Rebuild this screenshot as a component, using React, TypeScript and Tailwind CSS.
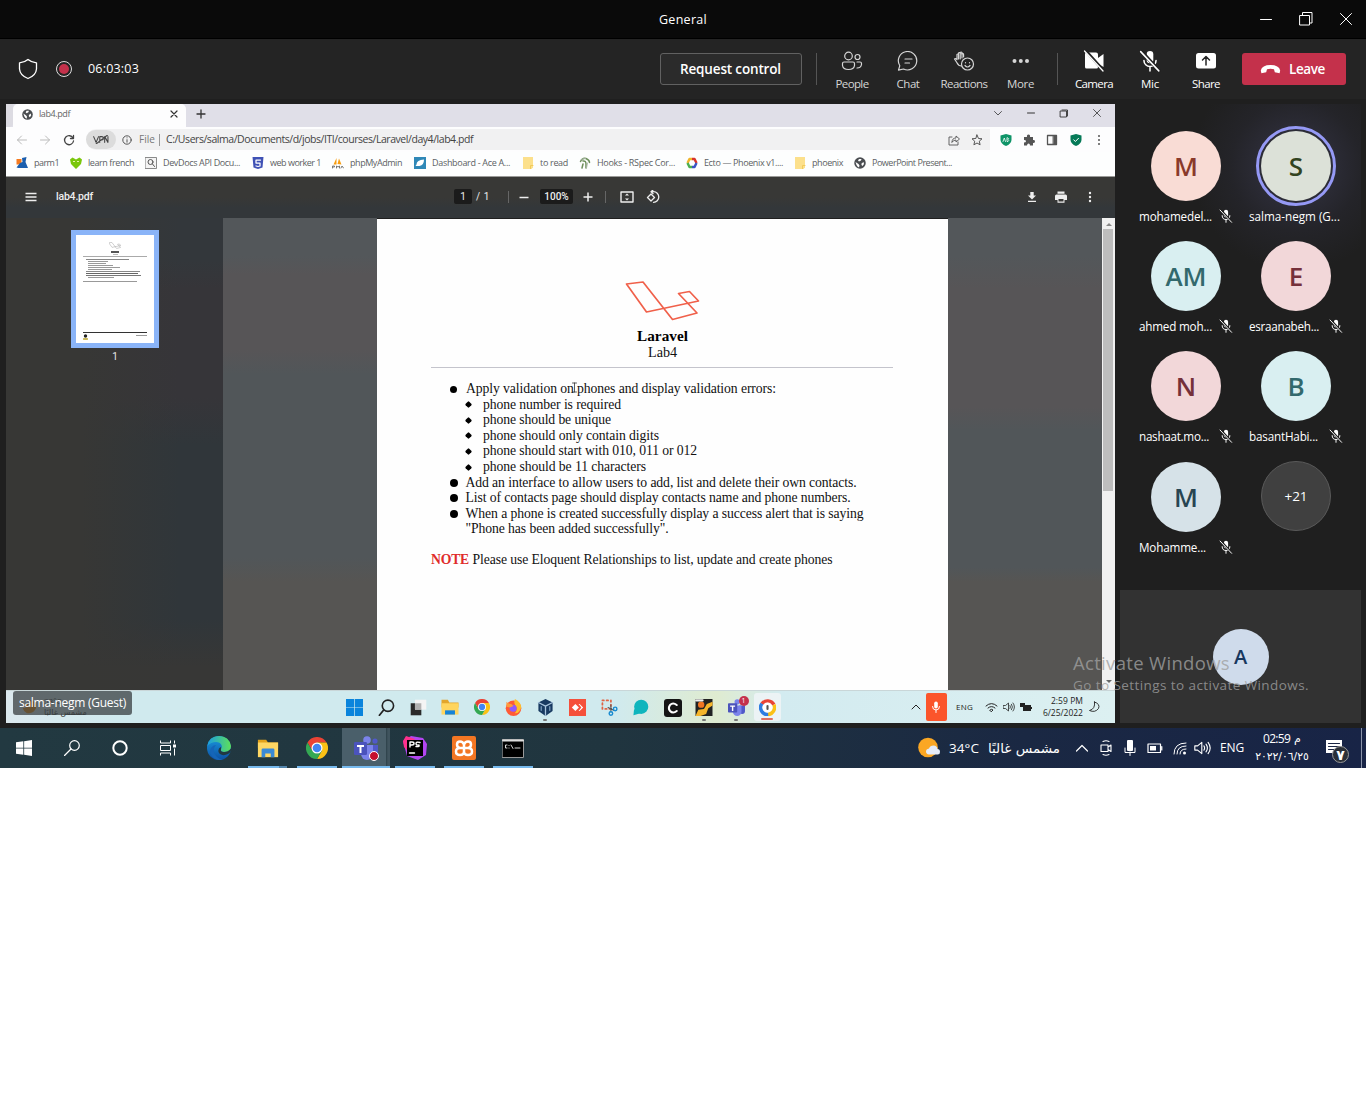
import { useLayoutEffect, useRef, useState, type ReactNode } from "react";

/* Text that is tracked so that it fills the width given in its classes. */
function Fit({ c, children }: { c: string; children: string }) {
  const outer = useRef<HTMLSpanElement>(null);
  const inner = useRef<HTMLSpanElement>(null);
  const [ls, setLs] = useState(0);
  useLayoutEffect(() => {
    if (!outer.current || !inner.current) return;
    const free = outer.current.getBoundingClientRect().width - inner.current.getBoundingClientRect().width;
    setLs(free / children.length);
  }, [children]);
  return (
    <span ref={outer} className={"block shrink-0 whitespace-nowrap " + c}>
      <span ref={inner} style={{ letterSpacing: ls }}>{children}</span>
    </span>
  );
}

function I({ c, v = "0 0 24 24", children }: { c: string; v?: string; children: ReactNode }) {
  return (
    <svg viewBox={v} className={"block shrink-0 " + c} fill="none" stroke="currentColor" strokeLinecap="round" strokeLinejoin="round">
      {children}
    </svg>
  );
}

const Chrome = ({ c }: { c: string }) => (
  <I c={c}>
    <g stroke="none">
      <path fill="#ea4335" d="M1.6 6A12 12 0 0 1 22.4 6H12L6.8 15Z" />
      <path fill="#fbc116" d="M22.4 6A12 12 0 0 1 12 24L17.2 15L12 6Z" />
      <path fill="#34a853" d="M12 24A12 12 0 0 1 1.6 6L6.8 15L12 18L17.2 15Z" />
      <circle cx="12" cy="12" r="6" fill="#fff" />
      <circle cx="12" cy="12" r="4.7" fill="#4285f4" />
    </g>
  </I>
);
const Globe = ({ c }: { c: string }) => (
  <I c={c}>
    <circle cx="12" cy="12" r="11.500" fill="#4a4d51" stroke="none" />
    <path d="M3 10l6 4 2 3-1 4-3-2-2-3zM10 4l5 0-1 3-4 2-2-2zM15 13l4-3 1 4-3 4-2-2z" fill="#fff" stroke="none" />
  </I>
);
const Folder = ({ c }: { c: string }) => (
  <I c={c}>
    <g stroke="none">
      <path fill="#e3a21a" d="M1 3h9l2 3h11v6H1z" />
      <path fill="#ffd763" d="M1 6h22v16H1z" />
      <path fill="#3a8ad6" d="M5 22v-8q0-1.500 1.500-1.500h11q1.500 0 1.500 1.500v8h-4v-4H9v4z" />
    </g>
  </I>
);
const Paper = ({ c }: { c: string }) => (
  <I c={c}><path d="M2 0h20v21l-3 3H2z" fill="#fce08c" stroke="none" /><path d="M17 24v-7h5" stroke="#f2cb5a" strokeWidth="2" /></I>
);
const MicOff = ({ c }: { c: string }) => (
  <I c={c} v="0 0 20 20">
    <rect x="7" y="1" width="6" height="11" rx="3" fill="currentColor" stroke="none" />
    <path d="M4.500 9.500a5.500 5.500 0 0 0 11 0M10 15v4" strokeWidth="1.400" />
    <path d="M2 1l16.500 18" stroke="#222" strokeWidth="3.200" />
    <path d="M1.500 1.500L18 19" strokeWidth="1.400" />
  </I>
);
const Teams = ({ c }: { c: string }) => (
  <I c={c}>
    <g stroke="none">
      <circle cx="13" cy="4" r="3.800" fill="#7b83eb" />
      <circle cx="21" cy="5" r="2.600" fill="#5059c9" />
      <path fill="#5059c9" d="M16 9h8v8a4 4 0 0 1-8 0z" />
      <path fill="#7b83eb" d="M7 9h12v9a6 6 0 0 1-12 0z" />
      <rect x="0" y="6" width="13" height="13" rx="1.200" fill="#4b53bc" />
      <path fill="#fff" d="M3 9h7v2H7.500v6h-2v-6H3z" />
    </g>
  </I>
);
const Win = ({ c }: { c: string }) => (
  <I c={c}><path fill="currentColor" stroke="none" d="M0 3.500L11 2v9.500H0zM12.200 1.800L24 0v11.500H12.200zM0 12.700h11V22L0 20.500zM12.200 12.700H24V24l-11.800-1.800z" /></I>
);
const Speaker = ({ c }: { c: string }) => (
  <I c={c} v="0 0 24 20"><path strokeWidth="1.600" d="M1 7h4l6-5v16l-6-5H1zM14 7q2 3 0 6M17 4.500q4 5.500 0 11M20 2q6 8 0 16" /></I>
);

const Tool = ({ c, t, lw, children }: { c: string; t: string; lw: string; children: ReactNode }) => (
  <div className={"flex h-[60px] shrink-0 flex-col items-center pt-[10px] " + c}>
    <div className="flex h-6 items-center justify-center">{children}</div>
    <Fit c={"mt-[2px] text-[11.5px] leading-[18px] " + lw}>{t}</Fit>
  </div>
);

function Header() {
  return (
    <>
      <div className="flex h-[39px] items-center border-b border-black bg-[#0a0a0a] text-white">
        <Fit c="ml-[659px] mt-[2px] w-[48px] text-[12.5px]">General</Fit>
        <I c="ml-[551px] h-4 w-4" v="0 0 16 16"><path d="M2.500 8.500h11" /></I>
        <I c="ml-[24px] h-4 w-4" v="0 0 16 16"><path d="M2 4.500h9.500v9.500H2zM4.500 4V1.500h9.500V12h-2" /></I>
        <I c="ml-[24px] h-4 w-4" v="0 0 16 16"><path d="M2.500 2.500l11 11M13.500 2.500l-11 11" /></I>
      </div>
      <div className="flex h-[60px] items-center bg-[#242424] text-white">
        <I c="ml-[18px] h-[22px] w-5" v="0 0 20 22"><path strokeWidth="1.300" d="M10 1.500Q13.500 4.500 18.500 4.800V11Q18 17.500 10 20.500Q2 17.500 1.500 11V4.800Q6.500 4.500 10 1.500z" /></I>
        <div className="ml-[18px] flex h-4 w-4 items-center justify-center rounded-full border-[1.5px] border-[#ddd]"><div className="h-[10px] w-[10px] rounded-full bg-[#c4314b]" /></div>
        <Fit c="ml-4 mt-px w-[51px] text-[12.5px] font-medium">06:03:03</Fit>
        <div className="ml-[521px] flex h-8 w-[142px] items-center rounded-[3px] border border-[#616161] bg-[#2b2b2b] pl-[19px]">
          <Fit c="w-[101px] text-[13.5px] font-semibold">Request control</Fit>
        </div>
        <div className="ml-[14px] h-8 w-px bg-[#555]" />
        <Tool c="ml-[7px] w-14 text-[#d6d6d6]" t="People" lw="w-[33px]">
          <I c="h-5 w-[22px]" v="0 0 22 20"><g strokeWidth="1.200"><circle cx="7.500" cy="5" r="3.800" /><circle cx="16.500" cy="6" r="2.500" /><path d="M3 11h9q1.500 0 1.500 1.500v2q-.5 4-6 4t-6-4v-2Q1.500 11 3 11zM16 11h3q1.500 0 1.500 1.500v1q-.5 3.500-4.500 3.500" /></g></I>
        </Tool>
        <Tool c="w-14 text-[#d6d6d6]" t="Chat" lw="w-[23px]">
          <I c="h-5 w-[22px]" v="0 0 22 20"><g strokeWidth="1.200"><path d="M1.500 19.200l1.300-4.500A9.200 9.200 0 1 1 6.500 18z" /><path d="M8 8h7M8 12h4.500" /></g></I>
        </Tool>
        <Tool c="w-14 text-[#d6d6d6]" t="Reactions" lw="w-[47px]">
          <I c="h-5 w-[22px]" v="0 0 22 20"><g strokeWidth="1.200"><path d="M8.500 15q-3 0-4.700-3.500L1.500 8q1-1 2.500.5V3.500q1-1 1.500 0V2q1-1 1.700 0V1.500q1-1 1.700 0V3q1.500-1 1.700.5V6" /><path d="M5.500 4v4M7.200 2v6M9 2v5" /><circle cx="14.500" cy="13" r="6" /><path d="M12 14.500q2.500 3 5 0M12.500 11.500v.3M16.500 11.500v.3" /></g></I>
        </Tool>
        <Tool c="w-[57px] text-[#d6d6d6]" t="More" lw="w-[27px]">
          <I c="h-5 w-[22px]" v="0 0 22 20"><g fill="currentColor" stroke="none"><circle cx="4.500" cy="10" r="2" /><circle cx="10.800" cy="10" r="2" /><circle cx="17" cy="10" r="2" /></g></I>
        </Tool>
        <div className="ml-[8px] h-8 w-px bg-[#555]" />
        <Tool c="ml-[8px] w-14" t="Camera" lw="w-[38px]">
          <I c="h-[22px] w-6" v="0 0 24 22"><path fill="currentColor" stroke="none" d="M3 4q0-1.500 1.500-1.500H14Q16 2.500 16 4.500V8l5.500-4v13L16 13.500V17q0 1.500-1.500 1.500h-10Q3 18.500 3 17z" /><path d="M4 1l17 19" stroke="#242424" strokeWidth="3" /><path d="M2.500 1L21 21" strokeWidth="1.300" /></I>
        </Tool>
        <Tool c="w-14" t="Mic" lw="w-[18px]"><MicOff c="h-[22px] w-[22px]" /></Tool>
        <Tool c="w-14" t="Share" lw="w-[28px]">
          <I c="h-5 w-5" v="0 0 20 20"><rect y="2" width="20" height="15.500" rx="2.500" fill="currentColor" stroke="none" /><path d="M10 14V6M6.500 9L10 5.500l3.500 3.500" stroke="#242424" strokeWidth="1.500" /></I>
        </Tool>
        <div className="ml-2 flex h-8 w-[104px] items-center rounded-[3px] bg-[#c4314b] pl-[18px]">
          <I c="h-3 w-[21px]" v="0 0 21 12"><path fill="currentColor" stroke="none" d="M.8 7.500Q2 2 10.500 2T20.200 7.500L19.600 10.200 14.800 9.300 14 6.300Q10.500 5.200 7 6.300L6.200 9.300 1.400 10.200z" /></I>
          <Fit c="ml-[8px] w-9 text-[13.5px] font-semibold">Leave</Fit>
        </div>
      </div>
    </>
  );
}

const marks: { t: string; c: string; w: string; i: ReactNode }[] = [
  { t: "parm1", c: "w-[54px]", w: "w-[25px]", i: <I c="h-3 w-3"><g stroke="none"><rect x="1" y="4" width="10" height="11" fill="#f57b20" /><path fill="#1c5fae" d="M12 2l9-2-2 10 5 12H5l-4-1 7-9 5-2z" /></g></I> },
  { t: "learn french", c: "w-[75px]", w: "w-[46px]", i: <I c="h-3 w-3"><path fill="#7ac70c" stroke="none" d="M0 5l5-4 7 4 7-4 5 4-2 9-10 10L2 14z" /><path stroke="#f4f7c0" strokeWidth="2" d="M7 9h2M15 9h2" /></I> },
  { t: "DevDocs API Docu...", c: "w-[107px]", w: "w-[77px]", i: <I c="h-3 w-3"><rect x="1" y="1" width="22" height="22" fill="#f4f4f4" stroke="#666" strokeWidth="1.500" /><circle cx="11" cy="10" r="5" stroke="#555" strokeWidth="2" /><path d="M15 14l4 5" stroke="#555" strokeWidth="2" /></I> },
  { t: "web worker 1", c: "w-[80px]", w: "w-[51px]", i: <I c="h-3 w-3"><path fill="#3f51b5" stroke="none" d="M1 0h22l-2 21-9 3-9-3z" /><path stroke="#fff" strokeWidth="2.500" d="M17 6H8v6h8v6l-4 1-4-1" /></I> },
  { t: "phpMyAdmin", c: "w-[82px]", w: "w-[52px]", i: <I c="h-3 w-3"><path fill="#f89c0e" stroke="none" d="M3 15L9 2v13zM11 14l3-11 5 12z" /><path d="M1 22v-4h4v2H2M9 22v-4l3 2 3-2v4M18 22l2-4 3 4" stroke="#777" strokeWidth="2" /></I> },
  { t: "Dashboard - Ace A...", c: "w-[108px]", w: "w-[78px]", i: <I c="h-3 w-3"><path fill="#2f88b7" stroke="none" d="M0 0h24v24H0z" /><path fill="#fff" stroke="none" d="M5 15Q5 6 20 5q0 11-9 13H3z" /></I> },
  { t: "to read", c: "w-[57px]", w: "w-[28px]", i: <Paper c="h-3 w-3" /> },
  { t: "Hooks - RSpec Cor...", c: "w-[107px]", w: "w-[78px]", i: <I c="h-3 w-3"><path d="M3 9q4-8 11-6 7 3 7 8M8 8q6-1 6 6v8M8 14l-2 8" stroke="#6d8f5b" strokeWidth="3" /><path d="M4 6q4-4 9-3M17 12l-2 10" stroke="#a9b7a6" strokeWidth="2" /></I> },
  { t: "Ecto — Phoenix v1....", c: "w-[108px]", w: "w-[79px]", i: <I c="h-3 w-3"><g strokeWidth="5" strokeLinecap="butt"><path stroke="#f0b429" d="M3 12l4-8h5" /><path stroke="#d9342b" d="M12 4h5l4 8" /><path stroke="#3b55c4" d="M21 12l-4 8h-5" /><path stroke="#4caf50" d="M12 20H7l-4-8" /></g></I> },
  { t: "phoenix", c: "w-[60px]", w: "w-[31px]", i: <Paper c="h-3 w-3" /> },
  { t: "PowerPoint Present...", c: "w-[100px]", w: "w-[80px]", i: <Globe c="h-3 w-3" /> },
];

function Browser() {
  return (
    <>
      <div className="flex h-[23px] items-start bg-[#e0dfe8] text-[#333]">
        <div className="h-full w-[7px] rounded-br-[4px] bg-[#dcdbe2]" />
        <div className="flex h-full w-[173px] items-center rounded-t-[5px] bg-[#fdfdfe] pb-[3px]">
          <Globe c="ml-[9px] h-[11px] w-[11px]" />
          <Fit c="ml-[6px] w-[31px] text-[9px] text-[#666]">lab4.pdf</Fit>
          <I c="ml-[100px] h-2 w-2" v="0 0 8 8"><path d="M1 1l6 6M7 1L1 7" strokeWidth="1.200" /></I>
        </div>
        <I c="ml-[10px] mt-[5px] h-[10px] w-[10px]" v="0 0 10 10"><path d="M5 1v8M1 5h8" strokeWidth="1.300" /></I>
        <I c="ml-[787px] mt-1 h-[10px] w-[10px]" v="0 0 10 10"><path d="M1.500 3.500L5 7l3.500-3.500" strokeWidth=".8" /></I>
        <I c="ml-[23px] mt-1 h-[10px] w-[10px]" v="0 0 10 10"><path d="M1.500 5h7" /></I>
        <I c="ml-[23px] mt-1 h-[10px] w-[10px]" v="0 0 10 10"><path d="M1.500 3h6v6h-6zM3 2h5.500v6" strokeWidth=".9" /></I>
        <I c="ml-[23px] mt-1 h-[10px] w-[10px]" v="0 0 10 10"><path d="M1.500 1.500l7 7M8.500 1.500l-7 7" strokeWidth=".8" /></I>
      </div>
      <div className="flex h-[25px] items-center bg-[#fdfdfe] text-[#555]">
        <I c="ml-[10px] h-3 w-3 text-[#bbb]" v="0 0 12 12"><path d="M10.500 6h-9M5.500 2l-4 4 4 4" /></I>
        <I c="ml-[11px] h-3 w-3 text-[#bbb]" v="0 0 12 12"><path d="M1.500 6h9M6.500 2l4 4-4 4" /></I>
        <I c="ml-[12px] h-3 w-3 text-[#444]" v="0 0 12 12"><path d="M10 4A4.500 4.500 0 1 0 10.500 7M10.500 1.500V4.500h-3" strokeWidth="1.300" /></I>
        <div className="ml-[11px] flex h-[21px] w-[904px] items-center rounded-l-full rounded-r-[7px] bg-[#f1f1f2]">
          <div className="flex h-[19px] w-[30px] items-center justify-center rounded-full bg-[#dcdcdc]">
            <I c="h-[9px] w-[18px] text-[#444]" v="0 0 20 11"><path d="M1 2l3 7 3-7M8.500 9V2H11q2 0 2 2t-2 2H9M14.500 9V2l4 7V2M4 11L18 0" strokeWidth="1.300" /></I>
          </div>
          <I c="ml-[6px] h-[10px] w-[10px]" v="0 0 10 10"><circle cx="5" cy="5" r="4.200" /><path d="M5 4.700V7.200M5 2.800v.1" /></I>
          <Fit c="ml-[7px] w-[16px] text-[10px] text-[#777]">File</Fit>
          <div className="ml-[4px] h-3 w-px bg-[#999]" />
          <Fit c="ml-[6px] mt-px w-[307px] text-[10.5px] text-[#444]">C:/Users/salma/Documents/d/jobs/ITI/courses/Laravel/day4/lab4.pdf</Fit>
          <I c="ml-[475px] h-3 w-3" v="0 0 12 12"><path d="M4 3H1v8h9V8M4 8q0-4 4-4V2l3.500 3L8 8V6Q6 6 4 8z" strokeWidth=".9" /></I>
          <I c="ml-[11px] h-3 w-3" v="0 0 12 12"><path d="M6 1l1.500 3.500 3.500.3-2.700 2.400.8 3.600L6 9l-3.100 1.800.8-3.600L1 4.800l3.500-.3z" /></I>
        </div>
        <I c="ml-[10px] h-3 w-3" v="0 0 12 12"><path fill="#0f9468" stroke="none" d="M6 0l5.500 1.500V6Q11 10 6 12 1 10 .5 6V1.500z" /><path d="M3 7.500l1.300-3.500L5.500 7.500M7 4v3.500h1Q9.500 6.500 8 5.700 9.500 4.500 8 4z" stroke="#fff" strokeWidth=".8" /></I>
        <I c="ml-[11px] h-3 w-3" v="0 0 12 12"><path fill="#555" stroke="none" d="M1 3h3Q3.500.5 5.500.5T7 3h3v3q2-.3 2 1.400T10 9v2.500H7Q7 9.500 5.600 9.500T4 11.500H1v-3q2 0 2-1.300T1 6z" /></I>
        <I c="ml-[11px] h-3 w-3" v="0 0 12 12"><path d="M1.500 1.500h9v9h-9z" strokeWidth="1.300" /><path d="M7.500 1.500h3v9h-3z" fill="#555" /></I>
        <I c="ml-[12px] h-3 w-3" v="0 0 12 12"><path fill="#067a58" stroke="none" d="M6 0l5.500 1.500V6Q11 10 6 12 1 10 .5 6V1.500z" /><path d="M3.700 5.800l1.700 1.700L8.500 4.300" stroke="#fff" /></I>
        <I c="ml-[11px] h-3 w-3" v="0 0 12 12"><g fill="#555" stroke="none"><circle cx="6" cy="2" r="1" /><circle cx="6" cy="6" r="1" /><circle cx="6" cy="10" r="1" /></g></I>
      </div>
      <div className="flex h-[25px] items-center border-b border-[#9a9a98] bg-[#fdfefe] pl-[10px] pb-[2px]">
        {marks.map((m) => (
          <div key={m.t} className={"flex shrink-0 items-center gap-[6px] " + m.c}>
            {m.i}
            <Fit c={"text-[9px] text-[#5c5f63] " + m.w}>{m.t}</Fit>
          </div>
        ))}
      </div>
    </>
  );
}

function PdfBar() {
  return (
    <div className="flex h-[41px] items-center bg-[linear-gradient(#383836_50%,#33373a_75%)] pb-[2px] text-[#eee]">
      <I c="ml-[19px] h-3 w-3" v="0 0 12 12"><path d="M.5 2.500h11M.5 6h11M.5 9.500h11" strokeWidth="1.300" strokeLinecap="butt" /></I>
      <Fit c="ml-[19px] w-[37px] font-[Roboto] text-[10.5px] font-medium">lab4.pdf</Fit>
      <div className="ml-[361px] flex h-[15px] w-[18px] items-center justify-center rounded-[2px] bg-[#1b1b1b] font-[Roboto] text-[10px]">1</div>
      <Fit c="ml-[4px] w-[14px] font-[Roboto] text-[10px]">/ 1</Fit>
      <div className="ml-[18px] h-3 w-px bg-[#666]" />
      <I c="ml-[10px] h-[10px] w-[10px]" v="0 0 10 10"><path d="M.5 5.500h9" strokeWidth="1.500" strokeLinecap="butt" /></I>
      <div className="ml-[11px] flex h-[15px] w-[33px] items-center justify-center rounded-[2px] bg-[#1b1b1b] font-[Roboto] text-[10px] font-medium">100%</div>
      <I c="ml-[10px] h-[10px] w-[10px]" v="0 0 10 10"><path d="M.5 5h9M5 .5v9" strokeWidth="1.500" strokeLinecap="butt" /></I>
      <div className="ml-[12px] h-3 w-px bg-[#666]" />
      <I c="ml-[14px] h-3 w-[14px]" v="0 0 14 12"><path d="M1 1h12v10H1z" strokeWidth="1.400" /><path fill="currentColor" stroke="none" d="M7 2.500l2 2H5zM7 9.500l2-2H5z" /></I>
      <I c="ml-[12px] h-[14px] w-[14px]" v="0 0 14 14"><path d="M5 4l3.500 3.500L5 11 1.500 7.500zM5 1.700h2.500a5.300 5.300 0 0 1 0 10.600M7 0L5 1.700 7 3.500" strokeWidth="1.300" /></I>
      <I c="ml-[366px] h-3 w-3" v="0 0 12 12"><path fill="currentColor" stroke="none" d="M4.300 1h3.400v3.500H10l-4 4-4-4h2.300zM2 9.800h8V11H2z" /></I>
      <I c="ml-[16px] h-[14px] w-[14px]" v="0 0 14 14"><path fill="currentColor" stroke="none" d="M3.500 1.500h7v2.200h-7zM2.500 4.500h9q1.500 0 1.500 1.500v4h-2.500v2.700h-7V10H1V6q0-1.500 1.500-1.500z" /><path d="M4.500 9h5v2.500h-5z" fill="#383836" stroke="none" /></I>
      <I c="ml-[16px] h-3 w-3" v="0 0 12 12"><g fill="currentColor" stroke="none"><circle cx="6" cy="2" r="1.200" /><circle cx="6" cy="6" r="1.200" /><circle cx="6" cy="10" r="1.200" /></g></I>
    </div>
  );
}

const Laravel = ({ c, s }: { c: string; s: string }) => (
  <I c={c} v="0 0 74 40"><path stroke={s} strokeWidth="1.700" d="M1 3L17.500 1 47 38.500 71.500 32 53 12.500 64 10.500 73 20 21 31z" /></I>
);

const Line = ({ w, k, children }: { w: string; k: "small" | "dot" | "diamond" | "none"; children: string }) => (
  <div className={"flex h-[15.55px] items-center " + (k === "diamond" ? "pl-[89px]" : "pl-[73px]")}>
    {k === "diamond" && <div className="mr-[12px] h-[5px] w-[5px] rotate-45 rounded-[1px] bg-black" />}
    {k === "small" && <div className="mr-[9px] h-[7px] w-[7px] rounded-full bg-black" />}
    {k === "dot" && <div className="mr-[7.5px] h-2 w-2 rounded-full bg-black" />}
    {k === "none" && <div className="w-[15.5px]" />}
    <Fit c={w}>{children}</Fit>
  </div>
);

function PdfBody() {
  return (
    <div className="flex h-[472px]">
      <div className="w-[217px] bg-[linear-gradient(90deg,#373735_35%,transparent_80%),linear-gradient(#33373b_9%,#363539_15%_38%,#30363a_48%_85%,#373736_95%)] pt-[12px]">
        <div className="ml-[65px] h-[118px] w-[88px] border-[5px] border-[#8ab4f8] bg-white px-[7px] pt-[7px]">
          <Laravel c="mx-auto h-[7px] w-[12px]" s="#555" />
          <div className="mx-auto mt-[2px] h-[1.500px] w-[8px] bg-[#555]" />
          <div className="mx-auto mt-[1px] h-px w-[5px] bg-[#bbb]" />
          <div className="mt-[1px] h-px bg-[#aaa]" />
          <div className="mt-[2px] ml-[3px] h-px w-[43px] bg-[#888]" />
          <div className="mt-[1px] ml-[5px] h-px w-[20px] bg-[#999]" />
          <div className="mt-[1px] ml-[5px] h-px w-[18px] bg-[#999]" />
          <div className="mt-[1px] ml-[5px] h-px w-[25px] bg-[#999]" />
          <div className="mt-[1px] ml-[5px] h-px w-[32px] bg-[#999]" />
          <div className="mt-[1px] ml-[5px] h-px w-[24px] bg-[#999]" />
          <div className="mt-[1px] ml-[3px] h-px w-[54px] bg-[#888]" />
          <div className="mt-[1px] ml-[3px] h-px w-[52px] bg-[#666]" />
          <div className="mt-[1px] ml-[3px] h-px w-[55px] bg-[#777]" />
          <div className="mt-[1px] ml-[5px] h-px w-[26px] bg-[#999]" />
          <div className="mt-[3px] h-px w-[54px] bg-[#999]" />
          <div className="mt-[50px] h-px bg-[#333]" />
          <div className="flex justify-between">
            <I c="mt-[1px] h-[6px] w-[5px]" v="0 0 5 6"><circle cx="2.500" cy="2" r="1.700" fill="#222" stroke="none" /><path d="M.5 5h4" stroke="#b9a326" strokeWidth="1.500" /></I>
            <div className="mt-[2px] h-px w-[11px] bg-[#999]" />
          </div>
        </div>
        <div className="ml-[105px] mt-px w-2 text-center font-[Roboto] text-[10px] text-[#e8e8e8]">1</div>
      </div>
      <div className="w-[154px] bg-[linear-gradient(#53575a_8%,#575557_12%_28%,#515659_33%_72%,#565553_77%)]" />
      <div className="mt-px h-[471px] w-[571px] bg-[#fefefe] font-['Liberation_Serif'] text-[13.7px] leading-[16px] text-[#111]">
        <Laravel c="ml-[248px] mt-[62px] h-[40px] w-[75px]" s="#f0604a" />
        <Fit c="ml-[260px] mt-[6px] w-[51px] text-[15.2px] leading-[17px] font-bold text-black">Laravel</Fit>
        <Fit c="ml-[271px] w-[29px] text-[14.200px] leading-[16px]">Lab4</Fit>
        <div className="mt-[7px] ml-[54px] mb-[13.5px] h-px w-[462px] bg-[#c4c4cc]" />
        <div className="relative">
          <Line k="small" w="w-[310px]">Apply validation on phones and display validation errors:</Line>
          <I c="absolute top-0 left-[194px] h-3 w-[7px]" v="0 0 7 12"><path d="M1.500 1h4M3.500 1v9M1.500 10h4" stroke="#333" strokeWidth=".8" /></I>
        </div>
        <Line k="diamond" w="w-[138px]">phone number is required</Line>
        <Line k="diamond" w="w-[128px]">phone should be unique</Line>
        <Line k="diamond" w="w-[176px]">phone should only contain digits</Line>
        <Line k="diamond" w="w-[214px]">phone should start with 010, 011 or 012</Line>
        <Line k="diamond" w="w-[163px]">phone should be 11 characters</Line>
        <Line k="dot" w="w-[391px]">Add an interface to allow users to add, list and delete their own contacts.</Line>
        <Line k="dot" w="w-[385px]">List of contacts page should display contacts name and phone numbers.</Line>
        <Line k="dot" w="w-[398px]">When a phone is created successfully display a success alert that is saying</Line>
        <Line k="none" w="w-[203px]">"Phone has been added successfully".</Line>
        <div className="mt-[15px] ml-[54px] flex items-center">
          <Fit c="w-[38px] font-bold text-[#e02b2b]">NOTE</Fit>
          <Fit c="ml-[3.5px] w-[360px]">Please use Eloquent Relationships to list, update and create phones</Fit>
        </div>
      </div>
      <div className="w-[154px] bg-[linear-gradient(#53575a_8%,#575557_15%_40%,#515659_45%_74%,#565553_77%)]" />
      <div className="w-[13px] bg-[#f1f1f1]">
        <div className="flex h-[11px] items-center justify-center"><I c="h-1 w-[6px]" v="0 0 6 4"><path d="M0 4l3-3 3 3z" fill="#888" stroke="none" /></I></div>
        <div className="ml-[1px] h-[262px] w-[10px] bg-[#bdbdbd]" />
        <div className="mt-[189px] flex justify-center"><I c="h-1 w-[6px]" v="0 0 6 4"><path d="M0 0l3 3 3-3z" fill="#666" stroke="none" /></I></div>
      </div>
    </div>
  );
}

const Cell = ({ children, m = "" }: { children: ReactNode; m?: string }) => (
  <div className="flex h-[32px] w-[31.77px] shrink-0 flex-col items-center pt-[8px]">
    {children}
    <div className={"mt-[3px] h-[2px] w-1 rounded-full " + m} />
  </div>
);

function SharedTaskbar() {
  return (
    <div className="flex h-[33px] items-center border-t border-[#c9d6d8] bg-[linear-gradient(90deg,#dce8ee,#d0eaee_10%_55%,#dfebd0_64%,#d3ebf0_70%,#dcf0f1)] text-[#222]">
      <div className="flex w-[333px] shrink-0 items-center">
        <I c="ml-[16px] h-4 w-4"><path fill="#f08c0c" stroke="none" d="M3 8q9 0 8-7 12 2 10 13-4 9-14 7Q2 18 1 13q8 2 2-5z" /></I>
        <div className="ml-[6px] w-[60px] text-[8px] leading-[12px] text-[#333]"><div>33°C</div><div className="w-max font-['DejaVu_Sans'] text-[8px]">مشمس غالبًا</div></div>
      </div>
      <Cell><I c="h-[17px] w-[17px]"><path fill="#0a84dc" stroke="none" d="M0 0h11.500v11.500H0zM12.500 0H24v11.500H12.500zM0 12.500h11.500V24H0zM12.500 12.500H24V24H12.500z" /></I></Cell>
      <Cell><I c="h-[17px] w-[17px]"><circle cx="14" cy="9.500" r="8" strokeWidth="2.300" /><path d="M8 15.500L2 23" strokeWidth="2.500" /></I></Cell>
      <Cell><I c="h-[17px] w-[17px]"><path fill="#2a2a2a" stroke="none" d="M1 6h15v17H1z" /><path fill="#f4f4f4" stroke="none" d="M7 1h16v14H7z" /><path fill="#b0b0b0" stroke="none" d="M7 6h9v9H7z" /></I></Cell>
      <Cell><I c="h-[17px] w-[18px]"><g stroke="none"><path fill="#e2a52b" d="M0 1h9l2 4h13v7H0z" /><path fill="#ffd55e" d="M0 6h24v16H0z" /><path fill="#1583d8" d="M5 22v-6h14v6z" /></g></I></Cell>
      <Cell><Chrome c="h-4 w-4" /></Cell>
      <Cell><I c="h-[17px] w-[17px]"><circle cx="12" cy="13" r="11" fill="#ff5a36" stroke="none" /><path d="M14 0q9 5 9 12-3 9-9 8 5-6 0-12-2-3 0-8z" fill="#ffbd2e" stroke="none" /><circle cx="11.500" cy="13" r="5" fill="#9059ff" stroke="none" /><path d="M2 4q2 3 7 3l3 3-5 2-5-1z" fill="#ff9a3c" stroke="none" /></I></Cell>
      <Cell m="bg-[#777]"><I c="h-[17px] w-[17px]"><path fill="#183a61" stroke="none" d="M12 0l10 5v12l-10 7-10-7V5z" /><path d="M2 5l10 5 10-5M12 10v13" stroke="#a8c4dd" strokeWidth="1.800" /><path d="M6 11v5M18 11v5" stroke="#6f93b3" strokeWidth="2" /></I></Cell>
      <Cell><I c="h-[17px] w-[17px]"><path fill="#f5503b" stroke="none" d="M0 0h24v24H0z" /><path fill="#fff" stroke="none" d="M9 7l5 5-5 5-5-5zM13.500 7H15l5 5-5 5h-1.500l4-5z" /></I></Cell>
      <Cell><I c="h-[17px] w-[17px]"><path d="M2 2h12v12H2z" stroke="#e06345" strokeWidth="2.500" strokeDasharray="2 4" /><path d="M10 12l8 4M14 8v10" stroke="#555" strokeWidth="1.500" /><circle cx="20" cy="14" r="2.500" stroke="#188bd1" strokeWidth="2" /><circle cx="14" cy="20.500" r="2.500" stroke="#188bd1" strokeWidth="2" /></I></Cell>
      <Cell><I c="h-[17px] w-[17px]"><circle cx="13" cy="11" r="10" fill="#0fb5bd" stroke="none" /><path d="M2 23l1-9 9 6z" fill="#0fb5bd" stroke="none" /></I></Cell>
      <Cell><I c="h-[18px] w-[18px]"><rect width="24" height="24" rx="4" fill="#151515" stroke="none" /><path d="M17 8q-5-4-9 0-3 4 0 8 4 4 9 0" stroke="#fff" strokeWidth="2.700" /></I></Cell>
      <Cell m="bg-[#777]"><I c="h-[17px] w-[18px]"><path fill="#222" stroke="none" d="M0 0h24v24H0z" /><path fill="#f5b52b" stroke="none" d="M0 24L4 15 12 14 16 7 24 4V9L18 13 15 21 7 24z" /><circle cx="8" cy="8" r="4.500" fill="#f07422" stroke="none" /><path d="M1 2h9" stroke="#eee" strokeWidth="3" /></I></Cell>
      <Cell m="bg-[#777]"><div className="relative"><Teams c="h-[17px] w-[17px]" /><div className="absolute -top-[3px] -right-[4px] flex h-[10px] w-[10px] items-center justify-center rounded-full bg-[#c4314b] text-[7px] text-white">1</div></div></Cell>
      <div className="ml-[2px] flex h-7 w-[27px] shrink-0 flex-col items-center rounded-[3px] bg-[#ecf3f5] pt-[6px]"><I c="h-[17px] w-[17px]"><g strokeWidth="5" strokeLinecap="butt"><path stroke="#e84436" d="M4 7a10 10 0 0 1 17 1" /><path stroke="#fbc116" d="M21 8a10 10 0 0 1-9 14" /><path stroke="#2f7de1" d="M13 22A10 10 0 0 1 4 6.500" /></g><circle cx="12" cy="12" r="7" fill="#fff" stroke="none" /><path d="M12 10v4" stroke="#555" strokeWidth="3" /></I><div className="mt-[2px] h-[2px] w-[12px] shrink-0 rounded-full bg-[#e0715f]" /></div>
      <I c="ml-[130px] h-[10px] w-[10px]" v="0 0 10 10"><path d="M1 7l4-4 4 4" /></I>
      <div className="ml-[5px] flex h-[28px] w-[21px] shrink-0 items-center justify-center rounded-[2px] bg-[#fb552b] text-white"><I c="h-3 w-[10px]" v="0 0 10 12"><rect x="3.200" y=".5" width="3.600" height="7" rx="1.800" fill="currentColor" stroke="none" /><path d="M1.500 5.500q0 3.500 3.500 3.500t3.500-3.500M5 9v2.500" /></I></div>
      <Fit c="ml-[9px] w-[17px] text-[8px]">ENG</Fit>
      <I c="ml-[12px] h-[11px] w-[13px]" v="0 0 13 11"><path d="M1 4q5.500-5 11 0M3 6q3.500-3 7 0M5 8q1.500-1.500 3 0L6.500 9.500z" /></I>
      <Speaker c="ml-[5px] h-[10px] w-[12px]" />
      <I c="ml-[5px] h-[11px] w-3" v="0 0 12 11"><path fill="currentColor" stroke="none" d="M3 3h8v6H3zM11 5h1v2h-1zM0 1h5v4H0z" /></I>
      <div className="ml-[10px] flex w-[41px] shrink-0 flex-col items-end text-[8.5px] leading-[12px]"><Fit c="w-[32px]">2:59 PM</Fit><Fit c="w-[40px]">6/25/2022</Fit></div>
      <I c="ml-[5px] h-3 w-3" v="0 0 12 12"><path d="M6.500 1q6 2 4 6.500Q7 12 1.500 9.500 7.500 8 6.500 1z" strokeWidth=".9" /></I>
    </div>
  );
}

const people: { i: string; n: string; w: string; a: string; c: string; m: boolean }[] = [
  { i: "M", n: "mohamedel...", w: "w-[73px]", a: "bg-[#f9dcd5] text-[#8a3a2b]", c: "", m: true },
  { i: "S", n: "salma-negm (G...", w: "w-[91px]", a: "bg-[#dce1d8] text-[#32431f]", c: "", m: false },
  { i: "AM", n: "ahmed moh...", w: "w-[73px]", a: "bg-[#d9eff1] text-[#33696d]", c: "", m: true },
  { i: "E", n: "esraanabeh...", w: "w-[70px]", a: "bg-[#f2d7d9] text-[#75303a]", c: "", m: true },
  { i: "N", n: "nashaat.mo...", w: "w-[70px]", a: "bg-[#f2d7d9] text-[#75303a]", c: "", m: true },
  { i: "B", n: "basantHabi...", w: "w-[69px]", a: "bg-[#d9eff1] text-[#33696d]", c: "", m: true },
  { i: "M", n: "Mohamme...", w: "w-[67px]", a: "bg-[#d6e2e8] text-[#284552]", c: "pt-px", m: true },
];

function Side() {
  return (
    <div className="relative ml-[5px] w-[241px]">
      <div className="flex h-[486px] flex-wrap content-start bg-[radial-gradient(circle_at_176px_62px,#2c2c37_35px,#242429_65px,#1f1f1f_105px)] pt-[27px] pl-[19px]">
        {people.map((p) => (
          <div key={p.n} className={"h-[110px] w-[110px] " + p.c}>
            <div className={"ml-[12px] flex h-[70px] w-[70px] items-center justify-center rounded-full text-[26px] font-semibold " + p.a + (p.m ? "" : " outline-[3px] outline-offset-[2px] outline-[#9599f5]")}>{p.i}</div>
            <div className="mt-[7px] flex h-[18px] items-center text-white">
              <div className="w-[80px]"><Fit c={"text-[11.7px] font-medium " + p.w}>{p.n}</Fit></div>
              {p.m && <MicOff c="-mt-[2px] h-[14px] w-[14px]" />}
            </div>
          </div>
        ))}
        <div className="ml-[12px] flex h-[70px] w-[70px] items-center justify-center rounded-full border border-[#5a5a5a] bg-[#404040] text-[13.5px] text-white">+21</div>
      </div>
      <div className="flex h-[133px] items-center justify-center bg-[#323232]">
        <div className="flex h-14 w-14 items-center justify-center rounded-full bg-[#cfdbeb] text-[20px] font-semibold text-[#17375e]">A</div>
      </div>
      <div className="absolute top-[546px] -left-[47px] text-[#a0a0a0]/80">
        <Fit c="w-[157px] text-[18.5px] leading-[25px]">Activate Windows</Fit>
        <Fit c="w-[236px] text-[13.5px] leading-[20px]">Go to Settings to activate Windows.</Fit>
      </div>
    </div>
  );
}

const Bottom = ({ w, u, children }: { w: string; u: string; children: ReactNode }) => (
  <div className={"flex h-10 shrink-0 flex-col items-center justify-between " + w}>
    <div className="flex h-[38px] items-center pt-[2px]">{children}</div>
    <div className={"h-[2px] w-full " + u} />
  </div>
);

function Taskbar() {
  return (
    <div className="flex h-10 items-center bg-[linear-gradient(90deg,#223941,#20353f_45%,#1a2843_75%,#182446)] text-white">
      <Win c="ml-4 h-4 w-4" />
      <I c="ml-8 h-4 w-4" v="0 0 16 16"><circle cx="10.500" cy="5.500" r="4.800" strokeWidth="1.200" /><path d="M7 9l-6.500 6.500" strokeWidth="1.200" /></I>
      <I c="ml-8 h-4 w-4" v="0 0 16 16"><circle cx="8" cy="8" r="6.700" strokeWidth="2" /></I>
      <I c="ml-8 h-4 w-4" v="0 0 16 16"><path d="M.5.500v2.500h10V.500M.5 15.500V13h10v2.500M.5 5.500h10v5H.5zM14.500.500v3M14.500 8.500v7" strokeLinecap="butt" /><path d="M13 4.500h3v3h-3z" fill="currentColor" stroke="none" /></I>
      <Bottom w="ml-[23px] w-10" u="">
        <I c="h-6 w-6">
          <defs>
            <linearGradient id="eg" x1="0" x2="1"><stop stopColor="#1b9de2" /><stop offset="1" stopColor="#5de05a" /></linearGradient>
            <linearGradient id="eb" x1="0" x2="0" y2="1"><stop stopColor="#1a9be0" /><stop offset="1" stopColor="#0c50a4" /></linearGradient>
          </defs>
          <circle cx="12" cy="12" r="12" fill="url(#eb)" stroke="none" />
          <path fill="url(#eg)" stroke="none" d="M.3 10Q2 0 12 0T24 10q0 6-7 6-4 0-3-3 1.500-2 .5-4Q13 6 9 6 4 6 .3 10z" />
          <path fill="#223941" stroke="none" d="M14 13q-1 3 3 3 4 0 7-3.500V15q-1 2-3 3-4 2-7 .5-4-2-2-6 1-1 1.500-1.500 1 .5.500 2z" />
          <path fill="#1565b8" stroke="none" d="M9 9q-5 6 1 12 3 3 7 2-5 2-9 0-7-5-4-11 2-3 5-3z" />
        </I>
      </Bottom>
      <Bottom w="ml-[9px] w-[39px]" u="bg-[linear-gradient(90deg,#76b9ed_31px,#5385ac_31px)]"><Folder c="h-[22px] w-[22px]" /></Bottom>
      <Bottom w="ml-[10px] w-10" u="bg-[#76b9ed]"><Chrome c="h-[22px] w-[22px]" /></Bottom>
      <Bottom w="ml-[5px] w-[48px] bg-[linear-gradient(90deg,#4a5f6a_44px,#2c4049_44px,#40545e_46px)]" u="bg-[#76b9ed]">
        <div className="relative"><Teams c="h-6 w-6" /><div className="absolute -right-[1px] -bottom-[1px] h-[10px] w-[10px] rounded-full border border-white bg-[#c50f2e]" /></div>
      </Bottom>
      <Bottom w="ml-[5px] w-10" u="bg-[#76b9ed]">
        <I c="h-6 w-6"><path fill="#b345f1" stroke="none" d="M0 5L8 0l12 2 4 6-1 11-8 5L4 20z" /><path fill="#ff318c" stroke="none" d="M0 5L3 0l9 3-8 11-3-3z" /><path fill="#000" stroke="none" d="M4 4h16v16H4z" /><path d="M7 11V6h2q2 0 2 1.500T9 9H7M17 6.500q-4-1-4 1t3 1.500q1 2-3 1.500M6.500 17h5" stroke="#fff" strokeWidth="1.400" /></I>
      </Bottom>
      <Bottom w="ml-[9px] w-10" u="bg-[#76b9ed]">
        <I c="h-6 w-6"><rect width="24" height="24" rx="2" fill="#f37623" stroke="none" /><path d="M12 8.500q-1-3-4-3t-3 3 3 3.500q-4 0-4 3.500t4 3.500 4-3.500v-7q1-3 4-3t3 3-3 3.500q4 0 4 3.500t-4 3.500-4-3.500M8 12h8" stroke="#fff" strokeWidth="2.500" /></I>
      </Bottom>
      <Bottom w="ml-[9px] w-10" u="bg-[#76b9ed]">
        <I c="h-[19px] w-[22px]" v="0 0 22 19"><path fill="#000" stroke="#999" d="M.5.500h21v18H.5z" /><path d="M1 1.500h20" stroke="#ddd" strokeWidth="2" /><path d="M5 6H3.500v3H5M7 6.500v.1M7 9v.1M9 6l2 3.500M13 9h5" stroke="#eee" strokeWidth=".9" /></I>
      </Bottom>
      <I c="ml-[385px] h-[22px] w-[22px]" v="0 0 22 22"><circle cx="10" cy="10.500" r="9.800" fill="#fba723" stroke="none" /><path fill="#e5ecf8" stroke="none" d="M11 17.500q-3-.5-3-3t3-3q1-3 4.500-3t4 3.500Q22 12 22 15t-3 2.500z" /></I>
      <Fit c="ml-[9px] mt-px w-[30px] text-[13.5px]">34°C</Fit>
      <div dir="rtl" className="mt-px ml-[8px] w-[73px] shrink-0 whitespace-nowrap font-['DejaVu_Sans'] text-[13.5px]">مشمس غالبًا</div>
      <I c="ml-[16px] h-3 w-3" v="0 0 12 12"><path d="M.5 9L6 3.500 11.500 9" strokeWidth="1.200" /></I>
      <I c="ml-[12px] h-4 w-3" v="0 0 12 16"><path d="M1 5h7v6.500H1zM8 7l3-2v6.500L8 9.500M3 1.500q3-1.500 6 0M3 14.500q3 1.500 6 0" strokeWidth="1.100" /></I>
      <I c="ml-[12px] h-4 w-3" v="0 0 12 16"><rect x="3" width="6" height="11" rx="1" fill="currentColor" stroke="none" /><path d="M1 8v4.500h10V8M6 12v3.500" /></I>
      <I c="ml-[11px] h-4 w-4" v="0 0 16 16"><path d="M1 4h12.500v8.500H1zM14.800 6.500v3.500" strokeWidth="1.200" /><path d="M3 6h6v4.500H3z" fill="currentColor" stroke="none" /></I>
      <I c="ml-[10px] h-[14px] w-[14px]" v="0 0 14 14"><path d="M1 13Q1 2 13 2M4 13Q4 5 13 5M7 13Q7 8 13 8" /><circle cx="11.500" cy="12" r="1.500" fill="currentColor" stroke="none" /></I>
      <Speaker c="ml-[7px] h-[14px] w-[17px]" />
      <Fit c="ml-[9px] w-[24px] text-[12px]">ENG</Fit>
      <div className="ml-[8px] flex w-[60px] shrink-0 flex-col items-center text-[12px] leading-[18px]">
        <div dir="ltr" className="flex gap-1"><Fit c="w-[27px]">02:59</Fit><span className="font-['DejaVu_Sans'] text-[11px]">م</span></div>
        <div dir="ltr" className="whitespace-nowrap font-['DejaVu_Sans'] text-[10.8px]">٢٠٢٢/٠٦/٢٥</div>
      </div>
      <div className="relative ml-[13px]">
        <I c="h-[18px] w-[18px]" v="0 0 18 18"><path fill="currentColor" stroke="none" d="M1 1h16v13h-6l-3 3.500V14H1z" /><path d="M3.500 4.500h11M3.500 7.500h11M3.500 10.500h7" stroke="#1b2645" strokeWidth="1.200" /></I>
        <div className="absolute top-[7px] left-[7px] flex h-[17px] w-[17px] items-center justify-center rounded-full border border-[#999] bg-[#2b3038] font-['DejaVu_Sans'] text-[14px] leading-none font-bold">٧</div>
      </div>
      <div className="ml-[18px] h-10 w-px bg-[#8a93a8]" />
    </div>
  );
}

export default function App() {
  return (
    <div className="h-[1112px] w-[1366px] overflow-hidden bg-white font-['Open_Sans',sans-serif]">
      <Header />
      <div className="flex h-[629px] bg-[#1f1f1f] pt-[5px] pl-[6px]">
        <div className="relative h-[619px] w-[1109px] overflow-hidden">
          <Browser />
          <PdfBar />
          <PdfBody />
          <SharedTaskbar />
          <div className="absolute top-[587px] left-[7px] flex h-[24px] w-[119px] items-center rounded-[3px] bg-[#383e40]/75 pl-[6px] text-white">
            <Fit c="w-[107px] text-[12px] font-medium">salma-negm (Guest)</Fit>
          </div>
        </div>
        <Side />
      </div>
      <Taskbar />
    </div>
  );
}
